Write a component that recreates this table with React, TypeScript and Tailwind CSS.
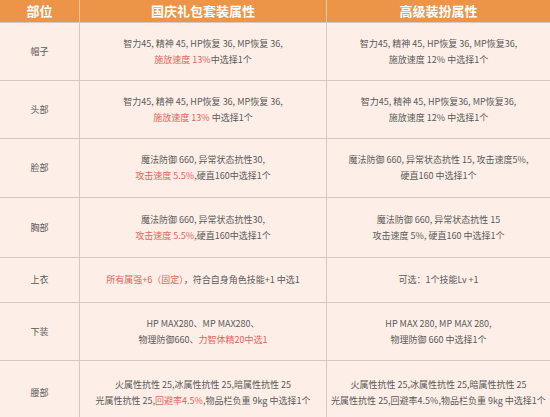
const font = { fontFamily: '"Noto Sans CJK SC", "Microsoft YaHei", sans-serif' };

type Row = { part: string; h: string; a: React.ReactNode; b: React.ReactNode };

const R = ({ children }: { children: React.ReactNode }) => (
  <span className="text-[#e0645b]">{children}</span>
);

const rows: Row[] = [
  {
    part: "帽子",
    h: "h-[58px]",
    a: (
      <>
        智力45, 精神 45, HP恢复 36, MP恢复 36,
        <br />
        <R>施放速度 13%</R>中选择1个
      </>
    ),
    b: (
      <>
        智力45, 精神 45, HP恢复 36, MP恢复36,
        <br />
        施放速度 12% 中选择1个
      </>
    ),
  },
  {
    part: "头部",
    h: "h-[58px]",
    a: (
      <>
        智力45, 精神 45, HP恢复 36, MP恢复 36,
        <br />
        <R>施放速度 13%</R> 中选择1个
      </>
    ),
    b: (
      <>
        智力45, 精神 45, HP恢复36, MP恢复36,
        <br />
        施放速度 12% 中选择1个
      </>
    ),
  },
  {
    part: "脸部",
    h: "h-[59px]",
    a: (
      <>
        魔法防御 660, 异常状态抗性30,
        <br />
        <R>攻击速度 5.5%</R>,硬直160中选择1个
      </>
    ),
    b: (
      <>
        魔法防御 660, 异常状态抗性 15, 攻击速度5%,
        <br />
        硬直160 中选择1个
      </>
    ),
  },
  {
    part: "胸部",
    h: "h-[60px]",
    a: (
      <>
        魔法防御 660, 异常状态抗性30,
        <br />
        <R>攻击速度 5.5%</R>,硬直160中选择1个
      </>
    ),
    b: (
      <>
        魔法防御 660, 异常状态抗性 15
        <br />
        攻击速度 5%, 硬直160 中选择1个
      </>
    ),
  },
  {
    part: "上衣",
    h: "h-[45px]",
    a: (
      <>
        <R>所有属强+6（固定）</R>，符合自身角色技能+1 中选1
      </>
    ),
    b: <>可选：1个技能Lv +1</>,
  },
  {
    part: "下装",
    h: "h-[58px]",
    a: (
      <>
        HP MAX280、MP MAX280、
        <br />
        物理防御660、<R>力智体精20中选1</R>
      </>
    ),
    b: (
      <>
        HP MAX 280, MP MAX 280,
        <br />
        物理防御 660 中选择1个
      </>
    ),
  },
  {
    part: "腰部",
    h: "h-[64px]",
    a: (
      <>
        火属性抗性 25,冰属性抗性 25,暗属性抗性 25
        <br />
        光属性抗性 25,<R>回避率4.5%</R>,物品栏负重 9kg 中选择1个
      </>
    ),
    b: (
      <>
        火属性抗性 25,冰属性抗性 25,暗属性抗性 25
        <br />
        光属性抗性 25,回避率4.5%,物品栏负重 9kg 中选择1个
      </>
    ),
  },
];

export default function App() {
  return (
    <div className="w-[550px] h-[417px] overflow-hidden bg-[#fdefe7]" style={font}>
      <div className="grid grid-cols-[80px_247px_1fr] h-[22px] bg-[#ec9447] text-white font-bold text-[13px] leading-[22px] text-center">
        <div className="border-r border-[#f6c9a3]">部位</div>
        <div className="border-r border-[#f6c9a3]">国庆礼包套装属性</div>
        <div>高级装扮属性</div>
      </div>
      {rows.map((r) => (
        <div
          key={r.part}
          className={`grid grid-cols-[80px_247px_1fr] ${r.h} border-t border-[#d5c8c0] text-[9px] leading-[16px] text-[#5a5a5a] text-center`}
        >
          <div className="flex items-center justify-center border-r border-[#d5c8c0]">{r.part}</div>
          <div className="flex items-center justify-center border-r border-[#d5c8c0] whitespace-nowrap">
            <div>{r.a}</div>
          </div>
          <div className="flex items-center justify-center whitespace-nowrap">
            <div>{r.b}</div>
          </div>
        </div>
      ))}
    </div>
  );
}
